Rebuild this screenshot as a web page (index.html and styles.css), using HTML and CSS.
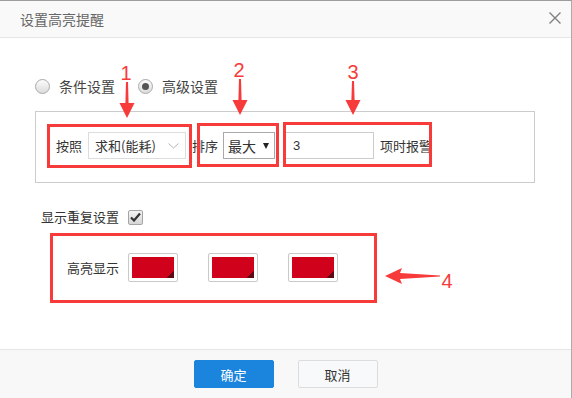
FILE: index.html
```html
<!DOCTYPE html>
<html lang="zh">
<head>
<meta charset="utf-8">
<title>设置高亮提醒</title>
<link rel="stylesheet" href="styles.css">
</head>
<body>
<div class="dialog">
  <div class="header">
    <span class="title">设置高亮提醒</span>
    <span class="close">
      <svg width="14" height="14" viewBox="0 0 14 14"><path d="M1.5 1.5 L12.5 12.5 M12.5 1.5 L1.5 12.5" stroke="#808080" stroke-width="1.4" fill="none"/></svg>
    </span>
  </div>
  <div class="body">
    <div class="mode-row">
      <span class="radio"></span><span class="radio-label">条件设置</span>
      <span class="radio checked second"></span><span class="radio-label">高级设置</span>
    </div>
    <div class="filter-box">
      <span class="lbl">按照</span>
      <span class="select sel-agg"><span>求和(能耗)</span>
        <svg width="11" height="6" viewBox="0 0 11 6"><path d="M0.5 0.5 L5.5 5 L10.5 0.5" stroke="#b5b5b5" stroke-width="1" fill="none"/></svg>
      </span>
      <span class="lbl lbl-sort">排序</span>
      <span class="select sel-order"><span>最大</span><span class="caret"></span></span>
      <span class="input">3</span>
      <span class="lbl lbl-tail">项时报警</span>
    </div>
    <div class="dup-row">
      <span class="lbl">显示重复设置</span>
      <span class="checkbox">
        <svg width="11" height="10" viewBox="0 0 11 10"><path d="M1 5.5 L4 8.5 L10 1.5" stroke="#333" stroke-width="2.2" fill="none"/></svg>
      </span>
    </div>
    <div class="hl-row">
      <span class="lbl">高亮显示</span>
      <span class="swatch first"><span class="fill"></span></span>
      <span class="swatch"><span class="fill"></span></span>
      <span class="swatch"><span class="fill"></span></span>
    </div>
  </div>
  <div class="footer">
    <button class="btn btn-primary">确定</button>
    <button class="btn btn-default">取消</button>
  </div>
  <svg class="annot" width="572" height="398" viewBox="0 0 572 398">
    <g fill="none" stroke="#f73b3b" stroke-width="3">
      <rect x="48.5" y="125.5" width="142" height="41"/>
      <rect x="198.5" y="124.5" width="79" height="41"/>
      <rect x="284.5" y="123.5" width="146" height="42"/>
      <rect x="51.5" y="234.5" width="324" height="67"/>
    </g>
    <g fill="#f73b3b">
      <path d="M126 82 L128 82 L128.6 103 L134.5 103 L127 118 L119.5 103 L125.4 103 Z"/>
      <path d="M239 79 L241 79 L241.6 100 L247.5 100 L240 115 L232.5 100 L238.4 100 Z"/>
      <path d="M352 81 L354 81 L354.6 100 L360.5 100 L353 115 L345.5 100 L351.4 100 Z"/>
      <path d="M385 276 L402 268 L400 273 L440 275.4 L440 276.6 L400 279 L402 284 Z"/>
    </g>
    <g fill="#f73b3b" font-family="Liberation Sans, Arial, sans-serif" font-size="20">
      <text x="126" y="80" text-anchor="middle">1</text>
      <text x="239" y="77" text-anchor="middle">2</text>
      <text x="353" y="79" text-anchor="middle">3</text>
      <text x="447" y="288" text-anchor="middle">4</text>
    </g>
  </svg>
</div>
</body>
</html>
```

FILE: styles.css
```css
html, body {
  margin: 0;
  padding: 0;
}
body {
  width: 572px;
  height: 398px;
  overflow: hidden;
  background: #fff;
  font-family: "Noto Sans CJK SC", "Noto Sans", sans-serif;
  color: #333;
}
.dialog {
  position: relative;
  width: 572px;
  height: 398px;
  box-sizing: border-box;
  border-top: 1px solid #9c9c9c;
  border-right: 1px solid #ababab;
  display: flex;
  flex-direction: column;
}
.header {
  height: 36px;
  flex: none;
  border-bottom: 1px solid #e6e6e6;
  background: #f9f9f9;
  display: flex;
  align-items: center;
  justify-content: space-between;
  padding: 0 9px 0 20px;
}
.title {
  font-size: 14px;
  line-height: 20px;
  color: #666;
}
.close {
  display: flex;
  margin-top: -2px;
}
.body {
  flex: 1;
  padding-left: 35px;
}
.mode-row {
  margin-top: 38px;
  height: 20px;
  display: flex;
  align-items: center;
}
.radio {
  width: 15px;
  height: 15px;
  box-sizing: border-box;
  border-radius: 50%;
  border: 1px solid #a9a9a9;
  background: linear-gradient(#fbfbfb, #dcdcdc);
  display: flex;
  align-items: center;
  justify-content: center;
}
.radio.second {
  margin-left: 23px;
}
.radio.checked::after {
  content: "";
  width: 7px;
  height: 7px;
  border-radius: 50%;
  background: #555;
}
.radio-label {
  margin-left: 9px;
  font-size: 14px;
  line-height: 20px;
  color: #444;
}
.lbl {
  font-size: 13px;
  line-height: 20px;
  color: #333;
  white-space: nowrap;
}
.filter-box {
  margin-top: 15px;
  width: 500px;
  height: 72px;
  box-sizing: border-box;
  border: 1px solid #cccccc;
  padding: 0 0 3px 20px;
  display: flex;
  align-items: center;
}
.select {
  height: 27px;
  box-sizing: border-box;
  background: #fff;
  display: flex;
  align-items: center;
  font-size: 13px;
  color: #333;
}
.sel-agg {
  margin-left: 6px;
  width: 98px;
  border: 1px solid #dddddd;
  padding: 0 6px 0 6px;
  justify-content: space-between;
}
.lbl-sort {
  margin-left: 6px;
}
.sel-order {
  margin-left: 5px;
  width: 52px;
  border: 1px solid #a9a9a9;
  padding-left: 4px;
  font-size: 14px;
}
.caret {
  margin-left: 7px;
  width: 0;
  height: 0;
  border-left: 3.5px solid transparent;
  border-right: 3.5px solid transparent;
  border-top: 6px solid #222;
}
.input {
  margin-left: 9px;
  width: 90px;
  height: 27px;
  box-sizing: border-box;
  border: 1px solid #cccccc;
  padding-left: 8px;
  font-family: "Liberation Sans", Arial, sans-serif;
  font-size: 13px;
  line-height: 25px;
  color: #333;
}
.lbl-tail {
  margin-left: 6px;
}
.dup-row {
  margin-top: 24px;
  height: 20px;
  padding-left: 6px;
  display: flex;
  align-items: center;
}
.checkbox {
  margin-left: 9px;
  width: 15px;
  height: 15px;
  box-sizing: border-box;
  border: 1px solid #a5a5a5;
  border-radius: 2px;
  background: linear-gradient(#f4f4f4, #d6d6d6);
  display: flex;
  align-items: center;
  justify-content: center;
}
.hl-row {
  margin-top: 26px;
  padding-left: 32px;
  display: flex;
  align-items: center;
}
.swatch {
  margin-left: 30px;
  width: 50px;
  height: 29px;
  box-sizing: border-box;
  border: 1px solid #c9c9c9;
  border-radius: 2px;
  padding: 3px;
  background: #fff;
  display: flex;
}
.swatch.first {
  margin-left: 9px;
}
.fill {
  flex: 1;
  background: linear-gradient(315deg, #5e0a14 0, #5e0a14 5px, #d0021b 5px);
}
.footer {
  flex: none;
  height: 48px;
  border-top: 1px solid #e5e5e5;
  background: #f8f8f9;
  display: flex;
  align-items: center;
  justify-content: center;
  gap: 24px;
}
.btn {
  width: 80px;
  height: 28px;
  box-sizing: border-box;
  border-radius: 2px;
  font-family: "Noto Sans CJK SC", sans-serif;
  font-size: 13px;
  padding: 0;
  cursor: pointer;
}
.btn-primary {
  background: #1b84dd;
  border: 1px solid #1b84dd;
  color: #fff;
}
.btn-default {
  background: #f8f9fb;
  border: 1px solid #dcdcdc;
  color: #333;
}
.annot {
  position: absolute;
  left: 0;
  top: -1px;
  pointer-events: none;
}
```
